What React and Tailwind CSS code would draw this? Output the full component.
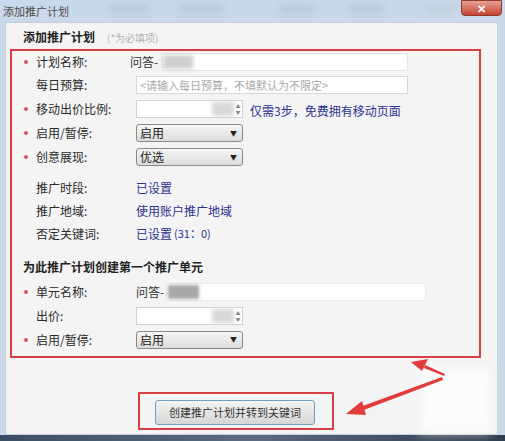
import React from 'react';

const font = { fontFamily: '"Noto Sans CJK SC", "Noto Sans", sans-serif' };

const Star = ({ on }) => (
  <span className="w-[12px] flex items-center">
    {on && <span className="w-[4px] h-[4px] rounded-full bg-[#d3585f]" />}
  </span>
);

const Label = ({ children }) => (
  <span className="w-[100px] text-[12px] text-[#2a2a2a]">{children}</span>
);

const Select = ({ value }) => (
  <div className="w-[107px] h-[18px] rounded-[3px] border border-[#888] bg-gradient-to-b from-[#f6f6f6] to-[#dcdcdc] flex items-center pl-[3px] pr-[5px]">
    <span className="text-[12px] text-[#222] leading-none">{value}</span>
    <span className="ml-auto text-[7px] text-[#222] leading-none">▼</span>
  </div>
);

const Spin = () => (
  <div className="w-[107px] h-[18px] border border-[#d2d2d2] bg-white flex items-center">
    <div className="ml-auto w-[22px] h-[14px] bg-[#d8d8d8] blur-[2px]" />
    <div className="w-[8px] h-full flex flex-col items-center justify-center text-[5px] text-[#888] leading-[6px]">
      <span>▲</span>
      <span>▼</span>
    </div>
  </div>
);

const Row = ({ h, star, label, children, className = '' }) => (
  <div className={`flex items-center ${h} ${className}`}>
    <Star on={star} />
    <Label>{label}</Label>
    {children}
  </div>
);

const Link = ({ children }) => (
  <span className="text-[12px] text-[#2d3190]">{children}</span>
);

export default function App() {
  return (
    <div className="relative w-[505px] h-[441px] bg-[#cad9e9] flex flex-col overflow-hidden" style={font}>
      {/* title bar */}
      <div className="h-[22px] flex items-start relative">
        <span className="mt-[3px] ml-[3px] text-[11px] text-[#4a4a4a]">添加推广计划</span>
        <div className="mt-[5px] ml-[40px] w-[40px] h-[8px] bg-[#b9c8d8] blur-[3px]" />
        <div className="mt-[5px] ml-[30px] w-[45px] h-[8px] bg-[#b9c8d8] blur-[3px]" />
        <div className="mt-[5px] ml-[55px] w-[35px] h-[8px] bg-[#b9c8d8] blur-[3px]" />
        <div className="mt-[5px] ml-[35px] w-[35px] h-[8px] bg-[#b9c8d8] blur-[3px]" />
        <div className="mt-[5px] ml-[40px] w-[30px] h-[8px] bg-[#c2d0de] blur-[3px]" />
        <div className="ml-auto mr-[3px] w-[41px] h-[16px] rounded-b-[4px] bg-gradient-to-b from-[#e8a194] to-[#c4422f] border border-[#8f3a30] flex items-center justify-center">
          <span className="text-white text-[11px] font-bold leading-none">✕</span>
        </div>
      </div>

      {/* panel */}
      <div className="flex-1 ml-[5px] w-[493px] bg-[#f4f4f4] border border-[#c3cfdb] flex flex-col">
        <div className="mt-[4px] h-[20px] pl-[17px] flex items-center gap-[12px]">
          <span className="text-[12px] font-bold text-[#222]">添加推广计划</span>
          <span className="text-[10px] text-[#b3b3b3]">(*为必填项)</span>
        </div>

        <div className="mt-[2px] ml-[4px] w-[471px] border-2 border-[#d33f42] pl-[12px] pb-[5px] flex flex-col">
          <Row h="h-[22px]" star label="计划名称:">
            <div className="-ml-[6px] flex items-center w-[278px]">
              <span className="text-[12px] text-[#333] w-[32px]">问答-</span>
              <div className="flex-1 h-[18px] bg-white border border-[#e6e6e6] flex items-center">
                <div className="w-[30px] h-[14px] bg-[#cfcfcf] blur-[2px]" />
              </div>
            </div>
          </Row>
          <Row h="h-[24px]" label="每日预算:">
            <div className="w-[272px] h-[18px] bg-white border border-[#d8d8d8] flex items-center pl-[3px]">
              <span className="text-[11px] text-[#a9a9a9]">&lt;请输入每日预算，不填默认为不限定&gt;</span>
            </div>
          </Row>
          <Row h="h-[24px]" star label="移动出价比例:">
            <Spin />
            <span className="ml-[7px]">
              <Link>仅需3步，免费拥有移动页面</Link>
            </span>
          </Row>
          <Row h="h-[24px]" star label="启用/暂停:">
            <Select value="启用" />
          </Row>
          <Row h="h-[24px]" star label="创意展现:">
            <Select value="优选" />
          </Row>
          <Row h="h-[23px]" label="推广时段:" className="mt-[7px]">
            <Link>已设置</Link>
          </Row>
          <Row h="h-[23px]" label="推广地域:">
            <Link>使用账户推广地域</Link>
          </Row>
          <Row h="h-[23px]" label="否定关键词:">
            <Link>已设置</Link>
            <span className="text-[11px] text-[#2d3190] ml-[2px]">(31：0)</span>
          </Row>

          <div className="mt-[12px] h-[20px] -ml-[1px] flex items-center">
            <span className="text-[12px] font-bold text-[#222]">为此推广计划创建第一个推广单元</span>
          </div>

          <Row h="h-[24px]" star label="单元名称:" className="mt-[3px]">
            <div className="flex items-center w-[290px]">
              <span className="text-[12px] text-[#333] w-[30px]">问答-</span>
              <div className="flex-1 h-[18px] bg-white border border-[#ececec] flex items-center">
                <div className="ml-[1px] w-[31px] h-[14px] bg-[#a8a8a8] blur-[1.5px]" />
              </div>
            </div>
          </Row>
          <Row h="h-[24px]" label="出价:">
            <Spin />
          </Row>
          <Row h="h-[23px]" star label="启用/暂停:">
            <Select value="启用" />
          </Row>
        </div>

        <div className="mt-[34px] ml-[132px] w-[196px] h-[38px] border-2 border-[#d33f42] pl-[15px] pt-[6px]">
          <div className="w-[160px] h-[25px] rounded-[3px] border border-[#6fa3c4] bg-gradient-to-b from-[#f4f4f4] to-[#d6d6d6] flex items-center justify-center">
            <span className="text-[11px] text-[#333]">创建推广计划并转到关键词</span>
          </div>
        </div>
      </div>

      {/* bottom edge */}
      <div className="h-[6px] bg-gradient-to-r from-[#3c4e63] via-[#5b6c80] to-[#2e3d4f]" />

      {/* annotations */}
      <div className="absolute left-[420px] top-[368px] w-[70px] h-[65px] bg-white/70 blur-[6px]" />
      <svg className="absolute left-0 top-0" width="505" height="441" viewBox="0 0 505 441">
        <polygon points="444,376 424,368 425,365 445,374" fill="#e23b3b" />
        <polygon points="411,362 428,359 422,371" fill="#e23b3b" />
        <polygon points="442,377 360,407 361,411 443,380" fill="#e23b3b" />
        <polygon points="346,414 362,401 366,415" fill="#e23b3b" />
      </svg>
    </div>
  );
}
